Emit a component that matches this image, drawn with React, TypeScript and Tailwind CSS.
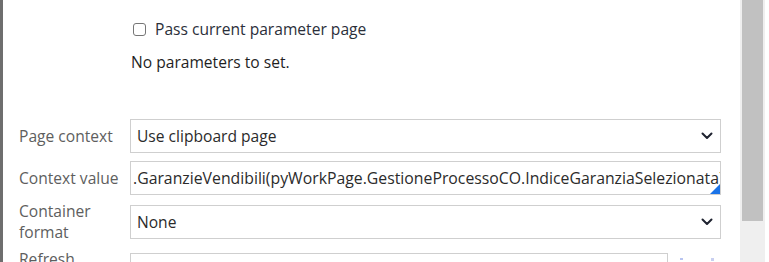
import React from "react";

function Chevron() {
  return (
    <svg width="12" height="8" viewBox="0 0 12 8" fill="none">
      <path d="M1.5 1.5 L6 6 L10.5 1.5" stroke="#1f2330" strokeWidth="2" strokeLinecap="round" strokeLinejoin="round" />
    </svg>
  );
}

export default function App() {
  return (
    <div className="relative h-[262px] w-[769px] overflow-hidden bg-white text-[15.6px] leading-[21px]" style={{ fontFamily: '"Open Sans", sans-serif' }}>
      <div className="absolute left-0 top-0 h-full w-[3px] bg-[#6e6e6e]" />
      <div className="absolute top-0 left-[740px] h-full w-[25px] bg-[#efefef]">
        <div className="ml-[2px] h-[221px] w-[21px] bg-[#c1c1c1]" />
      </div>
      <div className="flex flex-col pl-[19px] pr-[48px]">
        <div className="flex items-center pl-[114px] pt-[18px] h-[40px]">
          <span className="box-border mr-[9px] h-[13px] w-[13px] rounded-[3px] border border-[#767676] bg-white" />
          <span className="text-[#2b2f3a]">Pass current parameter page</span>
        </div>
        <div className="pl-[112px] pt-[12px] text-[#1f1f1f]">No parameters to set.</div>
        <div className="mt-[46px] flex items-center">
          <div className="w-[111px] text-[#5e5e5e]">Page context</div>
          <div className="flex h-[34px] w-[591px] items-center justify-between border border-[#cfcfcf] pl-[6px] pr-[7px] text-[#2b2b2b]">
            <span>Use clipboard page</span>
            <Chevron />
          </div>
        </div>
        <div className="mt-[8px] flex items-center">
          <div className="w-[111px] text-[#5e5e5e]">Context value</div>
          <div className="relative flex h-[34px] w-[591px] items-center overflow-hidden border border-[#cfcfcf] pl-[2px] text-[15.8px] text-[#2b2b2b] whitespace-nowrap">
            <span>.GaranzieVendibili(pyWorkPage.GestioneProcessoCO.IndiceGaranziaSelezionata)</span>
            <div className="absolute bottom-0 right-0 h-0 w-0 border-l-[10px] border-b-[10px] border-l-transparent border-b-[#1a73e8]" />
          </div>
        </div>
        <div className="mt-[6px] flex items-center">
          <div className="w-[111px] text-[#5e5e5e]">Container<br />format</div>
          <div className="flex h-[34px] w-[591px] items-center justify-between border border-[#cfcfcf] pl-[6px] pr-[7px] text-[#2b2b2b]">
            <span>None</span>
            <Chevron />
          </div>
        </div>
        <div className="mt-[6px] flex items-start">
          <div className="w-[111px] text-[#5e5e5e]">Refresh</div>
          <div className="mt-[4px] h-[34px] w-[538px] border border-[#cfcfcf]" />
          <div className="ml-[12px] mt-[9px] h-[2px] w-[3px] bg-[#b8c4f0]" />
          <div className="ml-[28px] mt-[9px] h-[3px] w-[3px] bg-[#c8cff0]" />
        </div>
      </div>
    </div>
  );
}
